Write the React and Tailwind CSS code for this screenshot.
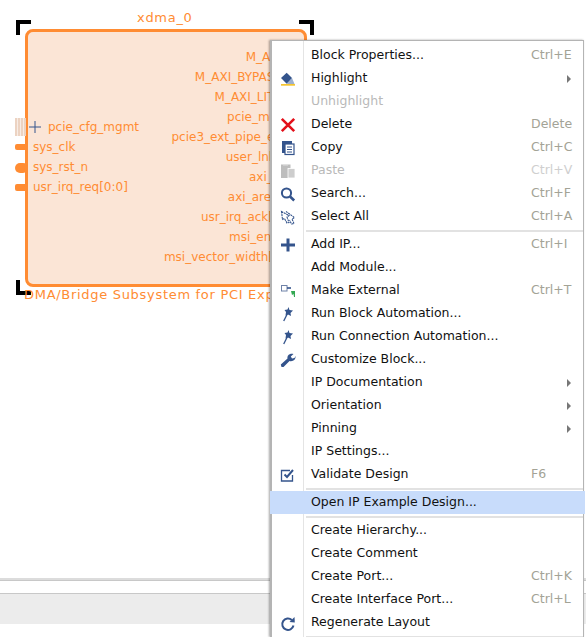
const BLUE = "#34548c";

const Icon = ({ children }) => (
  <svg width="18" height="18" viewBox="0 0 18 18" className="block">{children}</svg>
);

const icons = {
  highlight: (
    <Icon>
      <path d="M13 8 L15.500 14 L7.700 14 Z" fill="#9db0cf" />
      <path d="M2 8 L7.700 2.700 L13 8 L7.700 13.700 Z" fill={BLUE} />
      <rect x="2" y="14" width="14" height="1.700" fill="#f4c430" />
    </Icon>
  ),
  del: (
    <Icon>
      <path d="M2.800 2.800 L15.200 15.200 M15.200 2.800 L2.800 15.200" stroke="#e3101a" strokeWidth="2.600" fill="none" />
    </Icon>
  ),
  copy: (
    <Icon>
      <path d="M3 2 H13 V5 H6 V14 H3 Z" fill={BLUE} />
      <rect x="6" y="5" width="9" height="10.500" fill="#fff" stroke={BLUE} strokeWidth="1.200" />
      <path d="M8 8 H13 M8 10.500 H13 M8 13 H13" stroke={BLUE} strokeWidth="1" />
    </Icon>
  ),
  paste: (
    <Icon>
      <rect x="2" y="2.500" width="9.500" height="13.500" fill="#bdbdbd" />
      <rect x="4" y="2" width="5" height="1.500" fill="#e0e0e0" />
      <rect x="9" y="6.500" width="7" height="9.500" fill="#cdcdcd" stroke="#fff" strokeWidth="0.800" />
    </Icon>
  ),
  search: (
    <Icon>
      <circle cx="7.500" cy="8" r="4.600" fill="none" stroke={BLUE} strokeWidth="2" />
      <path d="M11 11.500 L15.200 15.500" stroke={BLUE} strokeWidth="2.600" />
    </Icon>
  ),
  select: (
    <Icon>
      <path d="M2.500 3.500 L10 7.500 L8 9 L10 14.500 L8 15 L5.500 10.500 L3.500 11.500 Z" fill="none" stroke={BLUE} strokeWidth="1.100" strokeDasharray="2 0.700" />
      <path d="M7 3.500 L15.500 9.500 L13 11 L15 15.500 L12.500 16 L10.500 12" fill="none" stroke={BLUE} strokeWidth="1.100" strokeDasharray="2 0.700" />
    </Icon>
  ),
  plus: (
    <Icon>
      <path d="M9 2.500 V15.500 M2 9 H16" stroke={BLUE} strokeWidth="3" />
    </Icon>
  ),
  external: (
    <Icon>
      <rect x="2.500" y="3.500" width="5.500" height="5.500" fill="#fff" stroke="#6f82a8" strokeWidth="1" />
      <path d="M8 6 H12" stroke={BLUE} strokeWidth="1.600" />
      <path d="M12 9 L16 9 L16 15 L15 15 L14.500 12 L13 13 Z" fill="#34a853" />
    </Icon>
  ),
  wand: (
    <Icon>
      <path d="M4.700 16 L8.700 8" stroke={BLUE} strokeWidth="1.300" />
      <path d="M9.500 2 L10.500 5 L14 5.500 L11.500 8 L12 11 L9 9.500 L6.500 10.500 L7 7 L5.500 5 L8.500 4.500 Z" fill={BLUE} />
    </Icon>
  ),
  wrench: (
    <Icon>
      <path d="M2.500 16 L1.800 13.500 L8.500 7.500 C8 4.500 10.500 2 14.500 3 L11.800 5.500 L13 7.500 L15.500 7 L16.500 5 C17 8.500 14 11 10.500 10 L4.500 16 Z" fill={BLUE} />
    </Icon>
  ),
  validate: (
    <Icon>
      <path d="M13.500 9 V15 H2.500 V4.500 H11" fill="none" stroke={BLUE} strokeWidth="1.300" />
      <path d="M5.500 8.500 L8 11 L14 4" fill="none" stroke={BLUE} strokeWidth="2" />
    </Icon>
  ),
  regen: (
    <Icon>
      <path d="M14.500 11.500 A5.700 5.700 0 1 1 12.800 6" fill="none" stroke={BLUE} strokeWidth="2" />
      <path d="M10.500 8 L15.800 8.500 L15.500 3 Z" fill={BLUE} />
    </Icon>
  ),
};

const menu = [
  { t: "Block Properties...", k: "Ctrl+E" },
  { t: "Highlight", i: "highlight", sub: true },
  { t: "Unhighlight", off: true },
  { t: "Delete", i: "del", k: "Delete" },
  { t: "Copy", i: "copy", k: "Ctrl+C" },
  { t: "Paste", i: "paste", k: "Ctrl+V", off: true },
  { t: "Search...", i: "search", k: "Ctrl+F" },
  { t: "Select All", i: "select", k: "Ctrl+A" },
  { sep: true },
  { t: "Add IP...", i: "plus", k: "Ctrl+I" },
  { t: "Add Module..." },
  { t: "Make External", i: "external", k: "Ctrl+T" },
  { t: "Run Block Automation...", i: "wand" },
  { t: "Run Connection Automation...", i: "wand" },
  { t: "Customize Block...", i: "wrench" },
  { t: "IP Documentation", sub: true },
  { t: "Orientation", sub: true },
  { t: "Pinning", sub: true },
  { t: "IP Settings..." },
  { t: "Validate Design", i: "validate", k: "F6" },
  { sep: true },
  { t: "Open IP Example Design...", active: true },
  { sep: true },
  { t: "Create Hierarchy..." },
  { t: "Create Comment" },
  { t: "Create Port...", k: "Ctrl+K" },
  { t: "Create Interface Port...", k: "Ctrl+L" },
  { t: "Regenerate Layout", i: "regen" },
  { sep: true },
];

const leftPins = ["sys_clk", "sys_rst_n", "usr_irq_req[0:0]"];
const rightPins = [
  { t: "M_AXI", bus: true },
  { t: "M_AXI_BYPASS", bus: true },
  { t: "M_AXI_LITE", bus: true },
  { t: "pcie_mgt", bus: true },
  { t: "pcie3_ext_pipe_ep", bus: true },
  { t: "user_lnk_up" },
  { t: "axi_aclk" },
  { t: "axi_aresetn" },
  { t: "usr_irq_ack[0:0]" },
  { t: "msi_enable" },
  { t: "msi_vector_width[4:0]" },
];

const Bracket = ({ className }) => <div className={`absolute w-[15px] h-[15px] border-black ${className}`} />;

function Block() {
  return (
    <div className="absolute left-0 top-0 w-[330px] h-[320px] text-[#ff8c33] text-[12px] leading-[20px]">
      <div className="absolute left-[137px] top-[9px] text-[13px] leading-[18px] tracking-[0.7px]">xdma_0</div>
      <div className="absolute left-[25px] top-[29px] w-[282px] h-[258px] bg-[#fbe5d6] border-[3px] border-[#ff8c33] rounded-[8px] flex justify-between pl-[5px] pr-[7px]">
        <div className="flex flex-col mt-[85px]">
          <div className="h-[20px] pl-[15px] whitespace-nowrap">pcie_cfg_mgmt</div>
          {leftPins.map((p) => (
            <div key={p} className="whitespace-nowrap h-[20px]">{p}</div>
          ))}
        </div>
        <div className="flex flex-col items-end mt-[15px]">
          {rightPins.map((p) => (
            <div key={p.t} className={`whitespace-nowrap ${p.bus ? "pr-[15px]" : ""}`}>{p.t}</div>
          ))}
        </div>
      </div>
      {/* pins */}
      <div className="absolute left-[15px] top-[118px] w-[11px] h-[18px] bg-[repeating-linear-gradient(90deg,#ecd3c2_0px,#ecd3c2_2px,#f7ece5_2px,#f7ece5_3px)]" />
      <svg className="absolute left-[29px] top-[120px]" width="12" height="14" viewBox="0 0 12 14">
        <path d="M0 7 H12 M6 1 V13" stroke="#34548c" strokeWidth="1" />
      </svg>
      <div className="absolute left-[15px] top-[144px] w-[11px] h-[6px] bg-[#ff8c33] rounded-l-[2px]" />
      <div className="absolute left-[15px] top-[163px] w-[13px] h-[10px] bg-[#ff8c33] rounded-[5px]" />
      <div className="absolute left-[15px] top-[184px] w-[11px] h-[7px] bg-[#ff8c33] rounded-l-[2px]" />
      <Bracket className="left-[16px] top-[20px] border-l-[4px] border-t-[4px]" />
      <Bracket className="left-[299px] top-[20px] border-r-[4px] border-t-[4px]" />
      <Bracket className="left-[16px] top-[280px] border-l-[4px] border-b-[4px]" />
      <div className="absolute left-[24px] top-[286px] text-[13px] leading-[18px] tracking-[0.7px] whitespace-nowrap">
        DMA/Bridge Subsystem for PCI Express
      </div>
    </div>
  );
}

function Menu() {
  return (
    <div className="absolute left-[270px] top-[40px] w-[314px] h-[597px] bg-white border-l-[2px] border-t border-r border-[#b4b4b4] shadow-[-1px_0_2px_rgba(0,0,0,0.35)] text-[12.5px] text-[#111] pt-[3px]">
      <div className="absolute left-[31px] top-0 bottom-0 w-px bg-[#e4e4e4]" />
      {menu.map((m, n) =>
        m.sep ? (
          <div key={n} className="h-[5px] flex items-center pl-[34px]">
            <div className="h-[2px] w-full bg-[#e2e2e2]" />
          </div>
        ) : (
          <div
            key={n}
            className={`relative h-[23px] flex items-center ${m.active ? "bg-[#c8dcfb] -mx-[2px] px-[2px]" : ""}`}
          >
            <div className="w-[34px] pl-[7px] shrink-0">{m.i ? icons[m.i] : null}</div>
            <div className={`flex-1 pl-[5px] whitespace-nowrap ${m.off ? "text-[#b9b9b9]" : ""}`}>{m.t}</div>
            <div className={`w-[52px] shrink-0 flex justify-end whitespace-nowrap ${m.off ? "text-[#cfcfcf]" : "text-[#a3a396]"}`}>
              {m.k ? <div className="w-full">{m.k}</div> : null}
              {m.sub ? (
                <div className="w-0 h-0 mr-[12px] border-y-[4px] border-y-transparent border-l-[4px] border-l-[#777]" />
              ) : null}
            </div>
          </div>
        )
      )}
    </div>
  );
}

export default function App() {
  return (
    <div className="relative w-[586px] h-[637px] bg-white overflow-hidden font-['DejaVu_Sans',sans-serif] flex flex-col">
      <div className="h-[578px] shrink-0" />
      <div className="h-[3px] shrink-0 bg-[#dcdcdc] border-b border-[#c8c8c8]" />
      <div className="h-[13px] shrink-0 border-b border-[#c8c8c8]" />
      <div className="h-[30px] shrink-0 bg-[#ececec]" />
      <Block />
      <Menu />
    </div>
  );
}
